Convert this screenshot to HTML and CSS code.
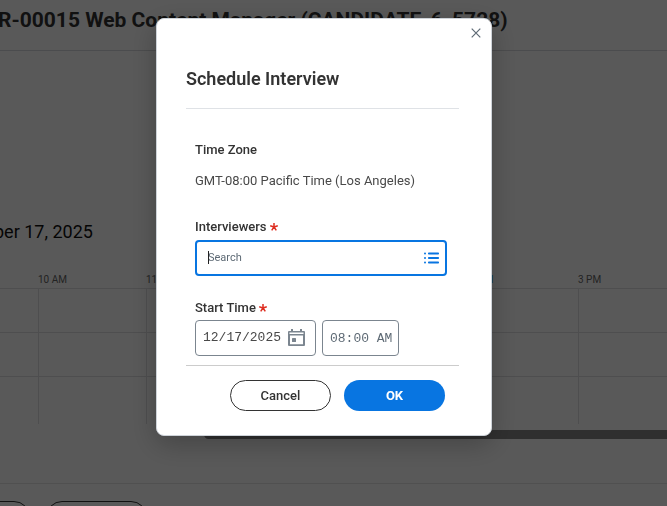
FILE: index.html
```html
<!DOCTYPE html>
<html lang="en">
<head>
<meta charset="utf-8">
<title>Schedule Interview</title>
<link rel="stylesheet" href="styles.css">
</head>
<body>
<div class="page">
  <header class="page-header"><h1>R-00015 Web Content Manager (CANDIDATE_6_5728)</h1></header>
  <main class="schedule">
    <h2>ber 17, 2025</h2>
    <div class="hours">
      <span></span><span>10 AM</span><span>11 AM</span><span>12 PM</span><span>1 PM</span><span class="current">2 PM</span><span>3 PM</span>
    </div>
    <div class="grid">
      <div class="row"><i></i><i></i><i></i><i></i><i></i><i></i><i></i></div>
      <div class="row"><i></i><i></i><i></i><i></i><i></i><i></i><i></i></div>
      <div class="row last"><i></i><i></i><i></i><i></i><i></i><i></i><i></i></div>
    </div>
    <div class="scroll-thumb"></div>
  </main>
  <footer class="page-footer">
    <div class="page-action first"></div>
    <div class="page-action"></div>
  </footer>
</div>
<div class="overlay">
  <form class="dialog" role="dialog" aria-labelledby="dialog-title">
    <button class="close" type="button" aria-label="Close">
      <svg width="10" height="10" viewBox="0 0 10 10"><path d="M.7.7l8.6 8.6M9.3.7L.7 9.3" fill="none" stroke="currentColor" stroke-width="1.2"/></svg>
    </button>
    <h2 class="dialog-title" id="dialog-title">Schedule Interview</h2>
    <div class="fields">
      <div class="field zone">
        <span class="label">Time Zone</span>
        <span class="value">GMT-08:00 Pacific Time (Los Angeles)</span>
      </div>
      <div class="field">
        <label class="label" for="interviewers">Interviewers
          <svg class="required" width="8" height="8" viewBox="0 0 8 8"><path d="M4 4V0M4 4L.2 2.8M4 4l3.8-1.2M4 4L1.7 7.4M4 4l2.3 3.4"/></svg>
        </label>
        <div class="search">
          <input id="interviewers" type="text" placeholder="Search" autofocus>
          <span class="caret"></span>
          <button type="button" aria-label="Show options">
            <svg width="15" height="12" viewBox="0 0 15 12" fill="currentColor"><circle cx="1" cy="1.5" r="1"/><circle cx="1" cy="6" r="1"/><circle cx="1" cy="10.5" r="1"/><rect x="4" y=".5" width="11" height="2" rx=".8"/><rect x="4" y="5" width="11" height="2" rx=".8"/><rect x="4" y="9.5" width="11" height="2" rx=".8"/></svg>
          </button>
        </div>
      </div>
      <div class="field start">
        <label class="label" for="date">Start Time
          <svg class="required" width="8" height="8" viewBox="0 0 8 8"><path d="M4 4V0M4 4L.2 2.8M4 4l3.8-1.2M4 4L1.7 7.4M4 4l2.3 3.4"/></svg>
        </label>
        <div class="times">
          <div class="date-box">
            <input id="date" type="text" value="12/17/2025">
            <button type="button" aria-label="Open calendar">
              <svg width="17" height="18" viewBox="0 0 17 18" fill="currentColor" fill-rule="evenodd"><path d="M1 2h2V0h2v2h7V0h2v2h2a1 1 0 0 1 1 1v13a1 1 0 0 1-1 1H1a1 1 0 0 1-1-1V3a1 1 0 0 1 1-1zM1.500 3.500V5h14V3.500zM2 6.500V15.300h13V6.500z"/><rect x="4" y="9" width="4" height="4" rx=".6"/></svg>
            </button>
          </div>
          <input class="time-box" type="text" value="08:00 AM" aria-label="Time">
        </div>
      </div>
    </div>
    <div class="actions">
      <button class="cancel" type="button">Cancel</button>
      <button class="ok" type="submit">OK</button>
    </div>
  </form>
</div>
</body>
</html>
```
FILE: styles.css
```css
* { box-sizing: border-box; }
body {
  margin: 0;
  font-family: Roboto, "Liberation Sans", sans-serif;
  color: #333;
  background: #fff;
}
h1, h2 { margin: 0; }
button, input { margin: 0; padding: 0; font: inherit; }
button { display: flex; align-items: center; justify-content: center; border: 0; background: none; cursor: pointer; }
svg { display: block; }

.page { height: 100vh; overflow: hidden; }
.page-header {
  padding: 8px 0 18px;
  border-bottom: 1px solid #d8dade;
}
.page-header h1 {
  margin-left: -2px;
  font-size: 21px;
  line-height: 24px;
  font-weight: 700;
  white-space: nowrap;
}
.schedule { padding-top: 169px; }
.schedule h2 {
  margin-left: -6px;
  font-size: 18px;
  line-height: 24px;
  font-weight: 400;
  color: #111;
}
.hours, .row {
  display: grid;
  grid-template-columns: 38px repeat(5, 108px) 1fr;
}
.hours {
  padding-top: 28px;
  font-size: 10px;
  line-height: 16px;
  color: #666;
}
.current { color: #0875e1; }
.row {
  height: 44px;
  border-top: 1px solid #dfdfe2;
}
.row.last { height: 48px; }
.row i + i { border-left: 1px solid #dfdfe2; }
.scroll-thumb {
  height: 9px;
  margin: 6px 0 0 204px;
  border-radius: 5px 0 0 5px;
  background: #888;
}
.page-footer {
  display: flex;
  gap: 16px;
  margin-top: 44px;
  padding-top: 17px;
  border-top: 1px solid #e4e4e6;
}
.page-action {
  width: 101px;
  height: 32px;
  border: 1px solid #333;
  border-radius: 16px;
}
.page-action.first { margin-left: -71px; }

.overlay {
  position: fixed;
  inset: 0;
  display: flex;
  justify-content: center;
  align-items: flex-start;
  padding: 18px 19px 18px 0;
  background: rgba(0, 0, 0, .65);
}
.dialog {
  position: relative;
  width: 100%;
  max-width: 336px;
  padding: 48px 32px 24px 29px;
  border: 1px solid #ced3d9;
  border-radius: 8px;
  background: #fff;
  box-shadow: 0 8px 28px rgba(0, 0, 0, .25);
}
.close {
  position: absolute;
  top: 4px;
  right: 5px;
  width: 20px;
  height: 20px;
  color: #5e6a75;
}
.dialog-title {
  padding-bottom: 17px;
  border-bottom: 1px solid #dfe2e6;
  font-size: 18px;
  line-height: 24px;
  font-weight: 600;
}
.fields {
  padding: 31px 12px 9px 9px;
  border-bottom: 1px solid #ccc;
}
.label {
  display: flex;
  align-items: center;
  gap: 3px;
  font-size: 13px;
  line-height: 20px;
  font-weight: 500;
}
.required {
  fill: none;
  stroke: #de2e21;
  stroke-width: 1.500;
}
.zone { margin-bottom: 26px; }
.value {
  display: block;
  margin-top: 11px;
  font-size: 13px;
  line-height: 20px;
  color: #494949;
}
.search {
  position: relative;
  display: flex;
  align-items: center;
  height: 36px;
  margin-top: 3px;
  padding: 0 6px 0 11px;
  border: 2px solid #0875e1;
  border-radius: 4px;
}
.search input {
  flex: 1;
  min-width: 0;
  border: 0;
  outline: 0;
  background: none;
  font-size: 11px;
  line-height: 16px;
  caret-color: transparent;
}
.search input::placeholder { color: #5e6a75; opacity: 1; }
.caret {
  position: absolute;
  left: 11px;
  top: 9px;
  width: 1px;
  height: 13px;
  background: #222;
}
.search button { color: #0875e1; }
.start { margin-top: 22px; }
.times { display: flex; gap: 6px; margin-top: 2px; }
.date-box, .time-box {
  height: 36px;
  border: 1px solid #7b858f;
  border-radius: 4px;
  background: #fff;
  font-family: "Liberation Mono", monospace;
  font-size: 13px;
  line-height: 20px;
}
.date-box {
  display: flex;
  align-items: center;
  gap: 6px;
  width: 121px;
  padding: 0 10px 0 7px;
}
.date-box input {
  flex: 1;
  min-width: 0;
  border: 0;
  outline: 0;
  color: #494949;
}
.date-box button { color: #7b858f; }
.time-box {
  width: 77px;
  padding-left: 7px;
  color: #5e6a75;
}
.actions {
  display: flex;
  justify-content: flex-end;
  gap: 13px;
  padding: 14px 14px 0 0;
}
.actions button {
  width: 101px;
  height: 31px;
  border-radius: 16px;
  font-size: 13px;
  line-height: 20px;
  font-weight: 500;
}
.cancel { border: 1px solid #333; color: #333; }
.actions .ok { background: #0875e1; color: #fff; font-weight: 700; }
```
